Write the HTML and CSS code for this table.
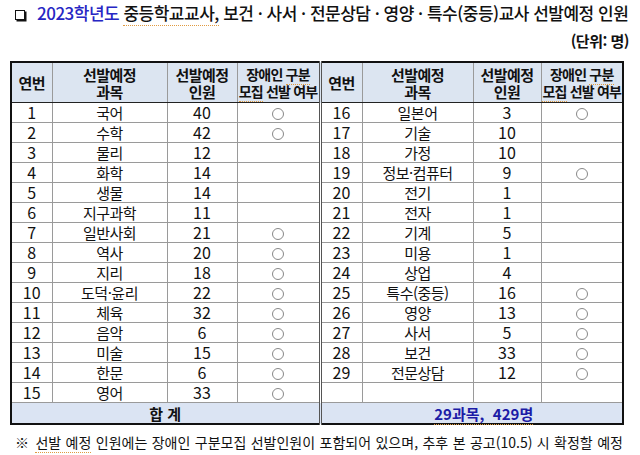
FILE: index.html
```html
<!DOCTYPE html>
<html lang="ko">
<head>
<meta charset="utf-8">
<link rel="stylesheet" href="styles.css">
</head>
<body>
<div class="page">
  <div class="title"><span class="box"></span><span class="blue">2023학년도</span> <span class="sq">중등학교교사,</span> 보건 · 사서 · 전문상담 · 영양 · 특수(중등)교사 선발예정 인원</div>
  <div class="unit">(단위: 명)</div>
  <table class="tbl">
    <colgroup>
      <col class="c1"><col class="c2"><col class="c3"><col class="c4">
      <col class="c5"><col class="c6"><col class="c7"><col class="c8">
    </colgroup>
    <thead>
      <tr>
        <th>연번</th><th>선발예정<br>과목</th><th>선발예정<br>인원</th><th class="narrow">장애인 <span class="sq">구분</span><br><span class="sq">모집</span> 선발 여부</th>
        <th class="mid">연번</th><th>선발예정<br>과목</th><th>선발예정<br>인원</th><th class="narrow">장애인 <span class="sq">구분</span><br><span class="sq">모집</span> 선발 여부</th>
      </tr>
    </thead>
    <tbody>
      <tr><td class="n">1</td><td class="k">국어</td><td class="n">40</td><td><span class="o"></span></td><td class="n mid">16</td><td class="k">일본어</td><td class="n">3</td><td><span class="o"></span></td></tr>
      <tr><td class="n">2</td><td class="k">수학</td><td class="n">42</td><td><span class="o"></span></td><td class="n mid">17</td><td class="k">기술</td><td class="n">10</td><td></td></tr>
      <tr><td class="n">3</td><td class="k">물리</td><td class="n">12</td><td></td><td class="n mid">18</td><td class="k">가정</td><td class="n">10</td><td></td></tr>
      <tr><td class="n">4</td><td class="k">화학</td><td class="n">14</td><td></td><td class="n mid">19</td><td class="k">정보·컴퓨터</td><td class="n">9</td><td><span class="o"></span></td></tr>
      <tr><td class="n">5</td><td class="k">생물</td><td class="n">14</td><td></td><td class="n mid">20</td><td class="k">전기</td><td class="n">1</td><td></td></tr>
      <tr><td class="n">6</td><td class="k">지구과학</td><td class="n">11</td><td></td><td class="n mid">21</td><td class="k">전자</td><td class="n">1</td><td></td></tr>
      <tr><td class="n">7</td><td class="k">일반사회</td><td class="n">21</td><td><span class="o"></span></td><td class="n mid">22</td><td class="k">기계</td><td class="n">5</td><td></td></tr>
      <tr><td class="n">8</td><td class="k">역사</td><td class="n">20</td><td><span class="o"></span></td><td class="n mid">23</td><td class="k">미용</td><td class="n">1</td><td></td></tr>
      <tr><td class="n">9</td><td class="k">지리</td><td class="n">18</td><td><span class="o"></span></td><td class="n mid">24</td><td class="k">상업</td><td class="n">4</td><td></td></tr>
      <tr><td class="n">10</td><td class="k">도덕·윤리</td><td class="n">22</td><td><span class="o"></span></td><td class="n mid">25</td><td class="k">특수(중등)</td><td class="n">16</td><td><span class="o"></span></td></tr>
      <tr><td class="n">11</td><td class="k">체육</td><td class="n">32</td><td><span class="o"></span></td><td class="n mid">26</td><td class="k">영양</td><td class="n">13</td><td><span class="o"></span></td></tr>
      <tr><td class="n">12</td><td class="k">음악</td><td class="n">6</td><td><span class="o"></span></td><td class="n mid">27</td><td class="k">사서</td><td class="n">5</td><td><span class="o"></span></td></tr>
      <tr><td class="n">13</td><td class="k">미술</td><td class="n">15</td><td><span class="o"></span></td><td class="n mid">28</td><td class="k">보건</td><td class="n">33</td><td><span class="o"></span></td></tr>
      <tr><td class="n">14</td><td class="k">한문</td><td class="n">6</td><td><span class="o"></span></td><td class="n mid">29</td><td class="k">전문상담</td><td class="n">12</td><td><span class="o"></span></td></tr>
      <tr><td class="n">15</td><td class="k">영어</td><td class="n">33</td><td><span class="o"></span></td><td class="mid"></td><td></td><td></td><td></td></tr>
    </tbody>
    <tfoot>
      <tr><td colspan="4" class="sum">합 계</td><td colspan="4" class="sum total mid"><span class="sq">29과목,&nbsp;&nbsp;429명</span></td></tr>
    </tfoot>
  </table>
  <div class="note"><span class="mark">※</span> <span class="sq">선발 예정</span> 인원에는 장애인 구분모집 선발인원이 포함되어 있으며, 추후 본 공고(10.5) 시 확정할 예정</div>
</div>
</body>
</html>
```

FILE: styles.css
```css
html, body {
  margin: 0;
  padding: 0;
  background: #ffffff;
}
body {
  font-family: "Noto Sans CJK KR", "Noto Sans", sans-serif;
  color: #111111;
}
.page {
  width: 640px;
  height: 455px;
  overflow: hidden;
}
.title {
  height: 26px;
  padding-left: 15px;
  font-size: 17px;
  font-weight: 500;
  letter-spacing: -0.5px;
  white-space: nowrap;
  line-height: 26px;
}
.box {
  display: inline-block;
  width: 8px;
  height: 8px;
  border: 1.5px solid #111;
  box-shadow: 1.5px 1.5px 0 #111;
  margin-right: 12px;
  vertical-align: 0px;
}
.blue {
  color: #2626c4;
}
.sq {
  border-bottom: 1px dotted #e09a40;
}
.unit {
  height: 35px;
  box-sizing: border-box;
  padding-top: 4px;
  line-height: 22px;
  text-align: right;
  padding-right: 11px;
  font-size: 15px;
  font-weight: 700;
  letter-spacing: -0.5px;
}
.tbl {
  margin-left: 10px;
  width: 612px;
  border-collapse: collapse;
  table-layout: fixed;
  border: 2px solid #111;
}
.c1 { width: 41px; }
.c2 { width: 115px; }
.c3 { width: 70px; }
.c4 { width: 83px; }
.c5 { width: 42px; }
.c6 { width: 111px; }
.c7 { width: 68px; }
.c8 { width: 82px; }
.tbl th, .tbl td {
  border: 1px solid #9a9a9a;
  text-align: center;
  padding: 0;
  white-space: nowrap;
}
.tbl th {
  background: #dce5f1;
  height: 39px;
  font-size: 15px;
  font-weight: 700;
  line-height: 17px;
  letter-spacing: -0.5px;
  border-bottom: 1px solid #222;
}
.tbl th.narrow {
  font-size: 14px;
  letter-spacing: -0.8px;
}
.tbl td {
  height: 19px;
  line-height: 19px;
  font-size: 16px;
}
.tbl td.k {
  font-size: 15px;
  letter-spacing: -0.5px;
}
.tbl .mid {
  border-left: 3px double #555;
}
.o {
  display: inline-block;
  width: 12px;
  height: 12px;
  border: 1px solid #888;
  border-radius: 50%;
  box-sizing: border-box;
  vertical-align: middle;
  margin-top: -2px;
}
.tbl td.sum {
  background: #dbe4f3;
  font-weight: 700;
  font-size: 15px;
  height: 20px;
  border-top: 1px solid #9a9a9a;
}
.tbl td.total {
  color: #1c1ca6;
  padding-left: 24px;
}
.note {
  padding-left: 15px;
  margin-top: 7px;
  font-size: 14px;
  line-height: 20px;
  word-spacing: 0.5px;
  white-space: nowrap;
}
.mark {
  font-weight: 700;
  margin-right: 2px;
}
```
